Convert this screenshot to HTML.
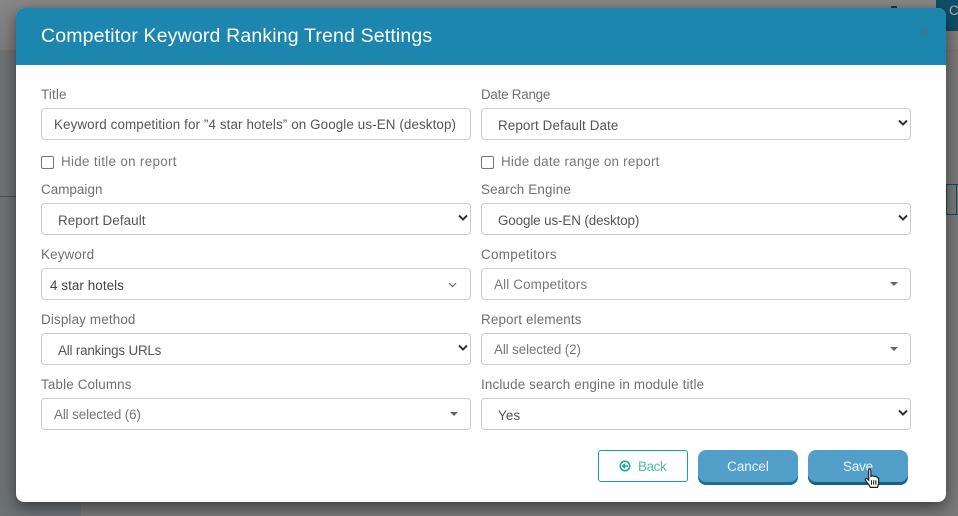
<!DOCTYPE html>
<html><head><meta charset="utf-8"><style>
html,body{margin:0;padding:0}
body{width:958px;height:516px;position:relative;overflow:hidden;background:#7f7f7f;font-family:"Liberation Sans",sans-serif}
.a{position:absolute}
.t{position:absolute;white-space:nowrap;line-height:16px;font-size:13.4px;letter-spacing:.16px}
.l{color:#6f6f6f}
.v{color:#555}
.p{color:#777}
.b{position:absolute;box-sizing:border-box;height:32px;border:1px solid #ccc;border-radius:4px;background:#fff}
.c{position:absolute;box-sizing:border-box;width:13px;height:13px;border:1px solid #767676;border-radius:2px;background:#fff}
.btn{position:absolute;top:450px;width:100px;height:35px;box-sizing:border-box;border-radius:8px;color:#eef6fa;font-size:13.4px;text-align:center;line-height:34px;letter-spacing:0;background:#52a0c9}
</style></head><body>
<div class="a" style="left:0;top:0;width:958px;height:50px;background:linear-gradient(#878787,#7b7b7b)"></div>
<div class="a" style="left:0;top:50px;width:958px;height:1px;background:#747474"></div>
<div class="a" style="left:0;top:51px;width:958px;height:465px;background:#797979"></div>
<div class="a" style="left:0;top:51px;width:81px;height:465px;background:#6d7275"></div>
<div class="a" style="left:0;top:196px;width:16px;height:1px;background:#4e5255"></div>
<div class="a" style="left:936px;top:0;width:22px;height:31px;background:#104f66"></div>
<div class="t" style="left:949px;top:3px;color:#9fb5be">C</div>
<div class="a" style="left:946px;top:184px;width:12px;height:31px;box-sizing:border-box;border:1px solid #0e4d5e;border-right:0"></div>
<div class="a" style="left:956px;top:184px;width:1px;height:31px;background:#0e4d5e"></div>
<div class="a" style="left:891px;top:6px;width:6px;height:3px;background:#333"></div>

<div class="a" style="left:16px;top:8px;width:930px;height:494px;background:#fff;border-radius:8px;box-shadow:0 5px 15px rgba(0,0,0,.5);overflow:hidden">
<div class="a" style="left:0;top:0;width:930px;height:57px;background:#1c86ae"></div>
</div>
<div class="t" style="left:41px;top:25px;font-size:19.5px;line-height:22px;color:#fff;letter-spacing:.16px">Competitor Keyword Ranking Trend Settings</div>
<svg class="a" style="left:921px;top:27px" width="9" height="9" viewBox="0 0 9 9"><path d="M1 1 8 8M8 1 1 8" stroke="#3f7695" stroke-width="1.800"/></svg>

<div class="t l" style="left:41px;top:87px">Title</div>
<div class="b" style="left:41px;top:108px;width:430px"></div>
<svg class="a" style="left:54px;top:114px" width="416" height="22"><text x="0" y="15" textLength="402" lengthAdjust="spacing" font-family="Liberation Sans, sans-serif" font-size="13.4" fill="#555">Keyword competition for ”4 star hotels” on Google us-EN (desktop)</text></svg>
<div class="c" style="left:41px;top:156px"></div>
<div class="t p" style="left:61px;top:154px;letter-spacing:.32px">Hide title on report</div>

<div class="t l" style="left:481px;top:87px;letter-spacing:-.24px">Date Range</div>
<div class="b" style="left:481px;top:108px;width:430px"></div>
<div class="t v" style="left:498px;top:118px;letter-spacing:.11px">Report Default Date</div>
<svg class="a" style="left:897px;top:119px" width="12" height="8" viewBox="0 0 12 8"><path d="M2 1.500 6 5.500 10 1.500" fill="none" stroke="#333" stroke-width="2"/></svg>
<div class="c" style="left:481px;top:156px"></div>
<div class="t p" style="left:501px;top:154px;letter-spacing:.24px">Hide date range on report</div>

<div class="t l" style="left:41px;top:182px;letter-spacing:.05px">Campaign</div>
<div class="b" style="left:41px;top:203px;width:430px"></div>
<div class="t v" style="left:58px;top:213px;letter-spacing:.09px">Report Default</div>
<svg class="a" style="left:457px;top:214px" width="12" height="8" viewBox="0 0 12 8"><path d="M2 1.500 6 5.500 10 1.500" fill="none" stroke="#333" stroke-width="2"/></svg>

<div class="t l" style="left:481px;top:182px">Search Engine</div>
<div class="b" style="left:481px;top:203px;width:430px"></div>
<div class="t v" style="left:498px;top:213px;letter-spacing:-.11px">Google us-EN (desktop)</div>
<svg class="a" style="left:897px;top:214px" width="12" height="8" viewBox="0 0 12 8"><path d="M2 1.500 6 5.500 10 1.500" fill="none" stroke="#333" stroke-width="2"/></svg>

<div class="t l" style="left:41px;top:247px">Keyword</div>
<div class="b" style="left:41px;top:268px;width:430px"></div>
<div class="t" style="left:50px;top:278px;color:#444;letter-spacing:.08px">4 star hotels</div>
<svg class="a" style="left:448px;top:282px" width="9" height="6" viewBox="0 0 9 6"><path d="M1 1 4.500 4.500 8 1" fill="none" stroke="#666" stroke-width="1.200"/></svg>

<div class="t l" style="left:481px;top:247px;letter-spacing:.34px">Competitors</div>
<div class="b" style="left:481px;top:268px;width:430px"></div>
<div class="t p" style="left:494px;top:277px">All Competitors</div>
<div class="a" style="left:890px;top:282px;border:4px solid transparent;border-top:4px solid #666;border-bottom:0"></div>

<div class="t l" style="left:41px;top:312px">Display method</div>
<div class="b" style="left:41px;top:333px;width:430px"></div>
<div class="t v" style="left:58px;top:343px;letter-spacing:-.19px">All rankings URLs</div>
<svg class="a" style="left:457px;top:344px" width="12" height="8" viewBox="0 0 12 8"><path d="M2 1.500 6 5.500 10 1.500" fill="none" stroke="#333" stroke-width="2"/></svg>

<div class="t l" style="left:481px;top:312px">Report elements</div>
<div class="b" style="left:481px;top:333px;width:430px"></div>
<div class="t p" style="left:494px;top:342px;letter-spacing:-.11px">All selected (2)</div>
<div class="a" style="left:890px;top:347px;border:4px solid transparent;border-top:4px solid #666;border-bottom:0"></div>

<div class="t l" style="left:41px;top:377px">Table Columns</div>
<div class="b" style="left:41px;top:398px;width:430px"></div>
<div class="t p" style="left:54px;top:407px;letter-spacing:-.11px">All selected (6)</div>
<div class="a" style="left:450px;top:412px;border:4px solid transparent;border-top:4px solid #666;border-bottom:0"></div>

<div class="t l" style="left:481px;top:377px">Include search engine in module title</div>
<div class="b" style="left:481px;top:398px;width:430px"></div>
<div class="t v" style="left:498px;top:408px">Yes</div>
<svg class="a" style="left:897px;top:409px" width="12" height="8" viewBox="0 0 12 8"><path d="M2 1.500 6 5.500 10 1.500" fill="none" stroke="#333" stroke-width="2"/></svg>

<div class="a" style="left:598px;top:450px;width:90px;height:32px;box-sizing:border-box;border:1px solid #18a689;border-radius:3px;background:#fff"></div>
<svg class="a" style="left:619px;top:460px" width="12" height="12" viewBox="0 0 12 12"><circle cx="6" cy="6" r="4.700" fill="none" stroke="#18a689" stroke-width="1.500"/><path d="M9 6H4M6 3.800 3.800 6 6 8.200" fill="none" stroke="#18a689" stroke-width="1.400"/></svg>
<div class="t" style="left:638px;top:459px;color:#4fbb9f;letter-spacing:-.35px">Back</div>

<div class="btn" style="left:698px;box-shadow:inset 0 -3px 0 #1f6f8f">Cancel</div>
<div class="btn" style="left:808px;letter-spacing:-.15px;box-shadow:inset 0 -3px 0 #14637c">Save</div>

<svg class="a" style="left:862px;top:467px" width="20" height="22" viewBox="0 0 18 20"><path d="M6 3C6 1.500 8 1.500 8 3V8.500L9.500 8 11 8.500 12.500 8.500 14 9.500 15 10.500V15L14 18.500H7.500L6 16 3 12C2.500 10.500 4 10 5 11L6 12Z" fill="#fff" stroke="#222" stroke-width="1.100"/><path d="M8.500 12V16M10.500 12V16M12.500 12V16" stroke="#222" stroke-width="1"/></svg>
</body></html>
